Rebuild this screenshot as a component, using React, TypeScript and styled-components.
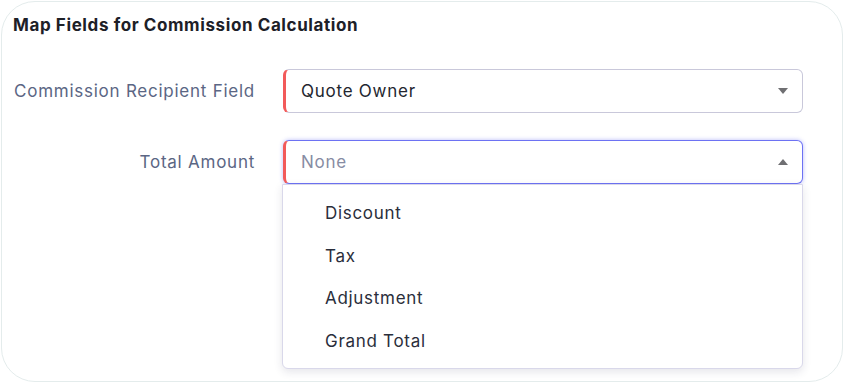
import React from 'react';
import styled, { createGlobalStyle } from 'styled-components';

const GlobalStyle = createGlobalStyle`
  html, body {
    margin: 0;
    padding: 0;
    background: #ffffff;
  }

  body {
    font-family: Inter, "Noto Sans", sans-serif;
  }
`;

interface IFieldRow {
  label: string;
  value: string;
  placeholder?: boolean;
  open?: boolean;
}

const rows: IFieldRow[] = [
  { label: 'Commission Recipient Field', value: 'Quote Owner' },
  { label: 'Total Amount', value: 'None', placeholder: true, open: true },
];

const options = ['Discount', 'Tax', 'Adjustment', 'Grand Total'];

const Card = styled.div`
  box-sizing: border-box;
  margin: 1px 1px 0 1px;
  width: 842px;
  height: 381px;
  border: 1px solid #e4ecec;
  border-radius: 34px;
  padding: 12px 11px;
  background: #ffffff;
`;

const Title = styled.h2`
  margin: 0;
  font-size: 17px;
  font-weight: 700;
  line-height: 22px;
  letter-spacing: 0.6px;
  color: #1d2027;
`;

const Form = styled.div`
  display: grid;
  grid-template-columns: 242px 520px;
  column-gap: 28px;
  row-gap: 27px;
  margin-top: 33px;
`;

const Label = styled.div`
  align-self: center;
  text-align: right;
  font-size: 17px;
  letter-spacing: 0.75px;
  color: #5b6684;
`;

const SelectWrap = styled.div`
  position: relative;
`;

const SelectBox = styled.div<{ $focused?: boolean }>`
  box-sizing: border-box;
  display: flex;
  align-items: center;
  justify-content: space-between;
  height: 44px;
  padding: 0 14px 0 15px;
  border: 1px solid ${(p) => (p.$focused ? '#6d72f3' : '#c9c8da')};
  border-left: 3px solid #f25a5a;
  border-radius: 6px;
  background: #ffffff;
  box-shadow: ${(p) => (p.$focused ? '0 0 4px rgba(98, 104, 245, 0.45)' : 'none')};
`;

const Value = styled.span<{ $placeholder?: boolean }>`
  font-size: 17px;
  letter-spacing: 0.75px;
  color: ${(p) => (p.$placeholder ? '#878ca3' : '#23262f')};
`;

const Caret = styled.span<{ $up?: boolean }>`
  width: 0;
  height: 0;
  border-left: 5px solid transparent;
  border-right: 5px solid transparent;
  ${(p) => (p.$up ? 'border-bottom: 6px solid #6f6f72;' : 'border-top: 6px solid #6f6f72;')}
`;

const Menu = styled.ul`
  position: absolute;
  top: 44px;
  left: -1px;
  right: 0;
  box-sizing: border-box;
  margin: 0;
  padding: 7px 0 6px;
  list-style: none;
  background: #ffffff;
  border: 1px solid #d9d8ea;
  border-radius: 0 0 6px 6px;
  box-shadow: 0 3px 8px rgba(40, 40, 80, 0.12);
  z-index: 2;
`;

const Option = styled.li`
  height: 42.5px;
  line-height: 42px;
  padding-left: 42px;
  font-size: 17px;
  letter-spacing: 0.7px;
  color: #2a2e3b;
`;

const App: React.FC = () => (
  <>
    <GlobalStyle />
    <Card>
      <Title>Map Fields for Commission Calculation</Title>
      <Form>
        {rows.map(({ label, value, placeholder, open }) => (
          <React.Fragment key={label}>
            <Label>{label}</Label>
            <SelectWrap>
              <SelectBox $focused={open}>
                <Value $placeholder={placeholder}>{value}</Value>
                <Caret $up={open} />
              </SelectBox>
              {open && (
                <Menu>
                  {options.map((option) => (
                    <Option key={option}>{option}</Option>
                  ))}
                </Menu>
              )}
            </SelectWrap>
          </React.Fragment>
        ))}
      </Form>
    </Card>
  </>
);

export default App;
